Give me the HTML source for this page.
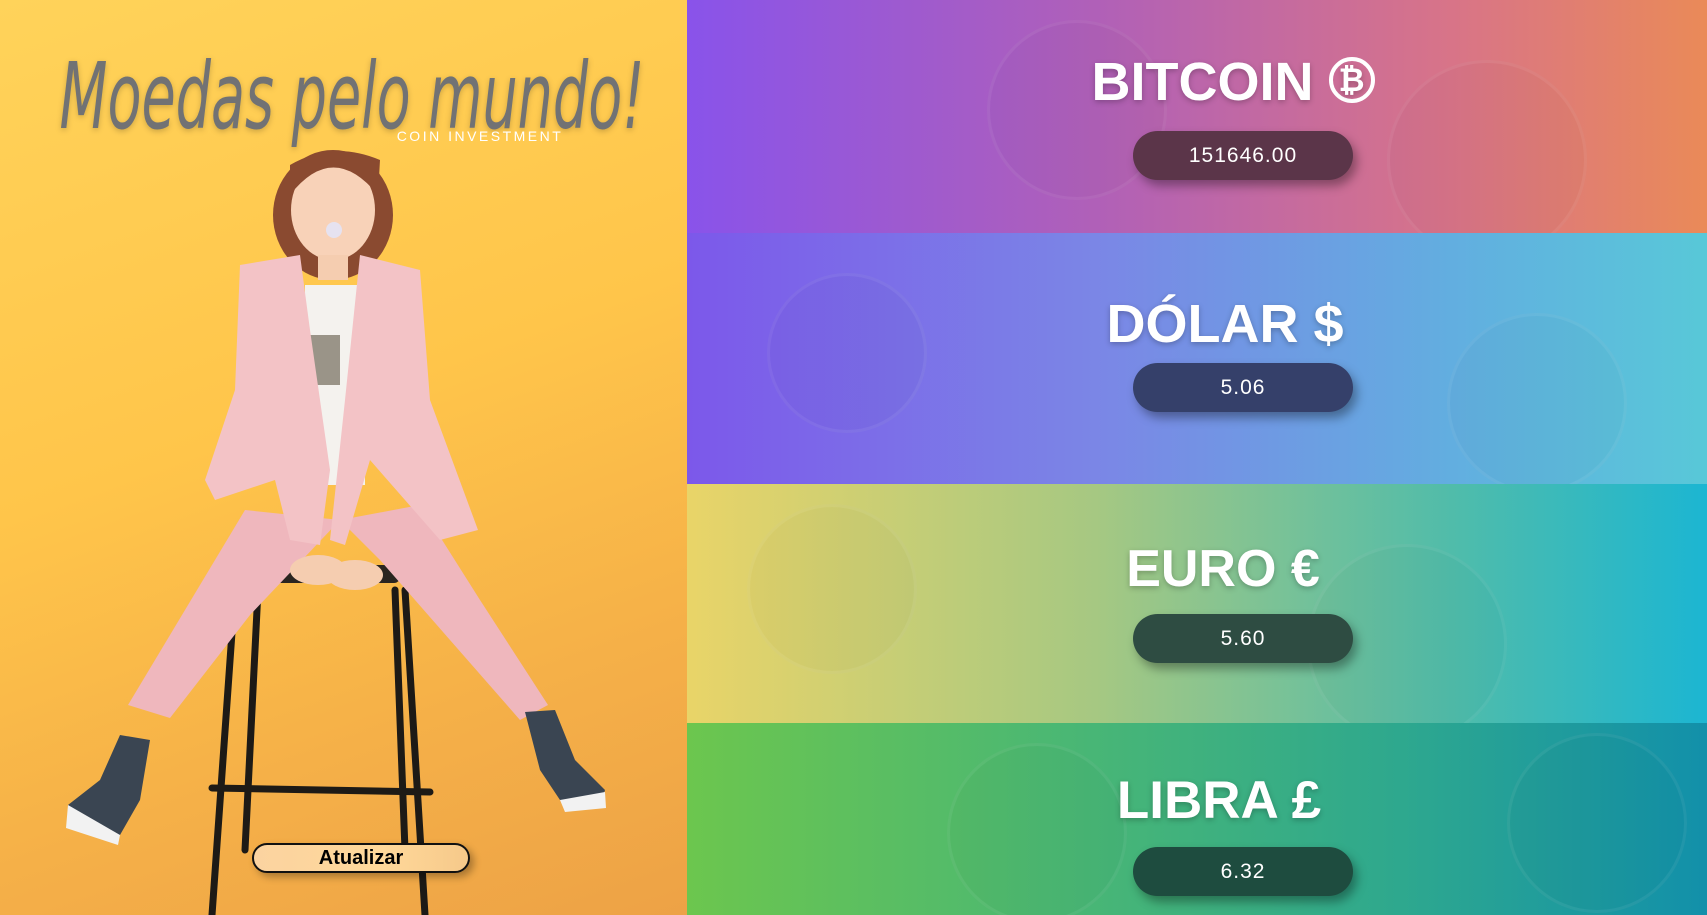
<!DOCTYPE html>
<html><head><meta charset="utf-8"><style>
*{margin:0;padding:0;box-sizing:border-box}
body{width:1707px;height:915px;overflow:hidden;position:relative;font-family:"Liberation Sans",sans-serif}
#left{position:absolute;left:0;top:0;width:687px;height:915px;background:linear-gradient(160deg,#ffd35a 0%,#ffc54a 45%,#f5b048 75%,#eda246 100%)}
.sec{position:absolute;left:687px;width:1020px;overflow:hidden}
.t{position:absolute;left:0;width:1020px;text-align:center;color:#fff;font-weight:bold;font-size:54px;text-shadow:0 2px 6px rgba(0,0,0,.25);line-height:1}
.p{position:absolute;left:446px;width:220px;height:49px;border-radius:25px;color:#fff;font-size:21px;text-align:center;line-height:49px;box-shadow:4px 6px 10px rgba(0,0,0,.35);letter-spacing:1px}
.c{position:absolute;border-radius:50%;border:3px solid rgba(255,255,255,.06);background:rgba(0,0,0,.02)}
</style></head><body>
<div id="left">
<svg width="687" height="915" viewBox="0 0 687 915" style="position:absolute;left:0;top:0">
 <g stroke="#1d1a16" stroke-width="7" fill="none" stroke-linecap="round">
  <line x1="235" y1="590" x2="212" y2="915"/>
  <line x1="258" y1="590" x2="245" y2="850"/>
  <line x1="405" y1="590" x2="425" y2="915"/>
  <line x1="395" y1="590" x2="405" y2="850"/>
  <line x1="212" y1="788" x2="430" y2="792"/>
 </g>
 <rect x="270" y="565" width="130" height="18" rx="6" fill="#2a2520"/>
 <ellipse cx="333" cy="215" rx="60" ry="65" fill="#8a4a30"/>
 <path d="M245 510 L340 520 L250 615 L170 718 L128 705 L185 610 Z" fill="#efb7bd"/>
 <path d="M340 520 L420 505 L480 600 L548 705 L520 720 L450 640 L380 560 Z" fill="#efb7bd"/>
 <path d="M120 735 L150 740 L140 800 L120 835 L70 820 L68 805 L100 780 Z" fill="#3a4552"/>
 <path d="M68 805 L120 835 L118 845 L66 828 Z" fill="#f2f2f2"/>
 <path d="M525 712 L555 710 L575 760 L605 790 L600 808 L560 800 L540 770 Z" fill="#3a4552"/>
 <path d="M560 800 L605 792 L606 808 L565 812 Z" fill="#f2f2f2"/>
 <rect x="305" y="285" width="60" height="200" fill="#f4f2ee"/>
 <rect x="310" y="335" width="30" height="50" fill="#9a9488"/>
 <path d="M240 265 L300 255 L310 330 L330 470 L320 545 L290 540 L275 480 L215 500 L205 480 L235 390 Z" fill="#f3c3c6"/>
 <path d="M360 255 L420 270 L430 400 L478 530 L440 540 L370 460 L345 545 L330 540 L345 400 Z" fill="#f3c3c6"/>
 <ellipse cx="318" cy="570" rx="28" ry="15" fill="#f5cdb0"/>
 <ellipse cx="355" cy="575" rx="28" ry="15" fill="#f5cdb0"/>
 <ellipse cx="333" cy="210" rx="42" ry="50" fill="#f8d2b8"/>
 <path d="M290 195 Q333 140 378 195 L380 160 Q333 140 290 165 Z" fill="#8a4a30"/>
 <circle cx="334" cy="230" r="8" fill="#e6e2f0"/>
 <rect x="318" y="255" width="30" height="25" fill="#f5cdb0"/>
 <text x="352" y="128" text-anchor="middle" font-family="DejaVu Sans, sans-serif" font-weight="200" font-style="italic" font-size="92" fill="#717274" textLength="585" lengthAdjust="spacingAndGlyphs" style="filter:drop-shadow(0 2px 3px rgba(0,0,0,.2))">Moedas pelo mundo!</text>
 <text x="480" y="141" text-anchor="middle" font-family="Liberation Sans, sans-serif" font-size="14" fill="#fff" letter-spacing="2.5">COIN INVESTMENT</text>
</svg>
<div style="position:absolute;left:252px;top:843px;width:218px;height:30px;border:2px solid #111;border-radius:16px;background:linear-gradient(90deg,#fbd3a0,#ffd89a 60%,#f6c98a);text-align:center;font-weight:bold;font-size:20px;line-height:26px;color:#000;box-shadow:4px 4px 8px rgba(0,0,0,.3)">Atualizar</div>
</div>

<div class="sec" style="top:0;height:233px;background:linear-gradient(90deg,#8953ea 0%,#b060b8 40%,#d87488 75%,#ea8a58 100%)">
 <div class="c" style="left:300px;top:20px;width:180px;height:180px"></div><div class="c" style="left:700px;top:60px;width:200px;height:200px"></div>
 <div class="t" style="top:55px;left:36px">BITCOIN <span style="display:inline-block;width:46px;height:46px;border:4px solid #fff;border-radius:50%;font-size:32px;line-height:38px;vertical-align:top;margin-top:2px">₿</span></div>
 <div class="p" style="top:131px;background:#5b3549">151646.00</div>
</div>
<div class="sec" style="top:233px;height:251px;background:linear-gradient(90deg,#7c58ea 0%,#7b86e6 40%,#62aee0 75%,#58c8d8 100%)">
 <div class="c" style="left:80px;top:40px;width:160px;height:160px"></div><div class="c" style="left:760px;top:80px;width:180px;height:180px"></div>
 <div class="t" style="top:64px;left:28px">DÓLAR $</div>
 <div class="p" style="top:130px;background:#35406a">5.06</div>
</div>
<div class="sec" style="top:484px;height:239px;background:linear-gradient(90deg,#e9d468 0%,#a6c882 40%,#50bcaa 75%,#1cb6d2 100%)">
 <div class="c" style="left:60px;top:20px;width:170px;height:170px"></div><div class="c" style="left:620px;top:60px;width:200px;height:200px"></div>
 <div class="t" style="top:59px;left:26px;font-size:52px">EURO €</div>
 <div class="p" style="top:130px;background:#2e4c42">5.60</div>
</div>
<div class="sec" style="top:723px;height:192px;background:linear-gradient(90deg,#6cc64e 0%,#4cb872 35%,#2ea88e 70%,#1290aa 100%)">
 <div class="c" style="left:260px;top:20px;width:180px;height:180px"></div><div class="c" style="left:820px;top:10px;width:180px;height:180px"></div>
 <div class="t" style="top:51px;left:22px;font-size:53px">LIBRA £</div>
 <div class="p" style="top:124px;background:#1e4c3f">6.32</div>
</div>
</body></html>
